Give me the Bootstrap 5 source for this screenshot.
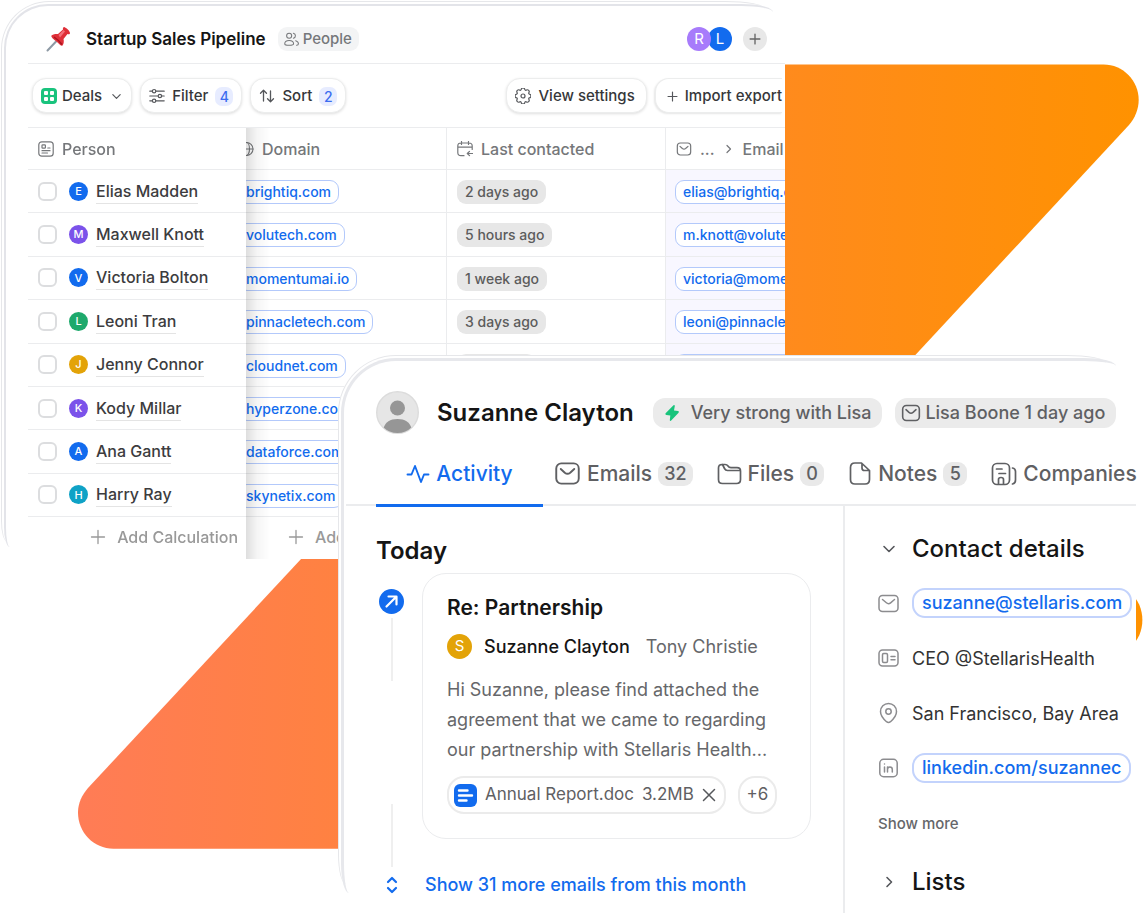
<!DOCTYPE html>
<html lang="en">
<head>
<meta charset="utf-8">
<meta name="viewport" content="width=device-width, initial-scale=1">
<title>Startup Sales Pipeline</title>
<link href="https://cdn.jsdelivr.net/npm/bootstrap@5.3.0/dist/css/bootstrap.min.css" rel="stylesheet">
<style>
  :root { --accent:#126bee; --line:#ebecee; --muted:#75777a; --pillline:#b3c9fb; }
  body { font-family: Inter, "Liberation Sans", sans-serif; font-size:16px; color:#151515; background:#fff; }
  svg { display:block; flex:none; }
  a { text-decoration:none; }
  .ico { fill:none; stroke:currentColor; stroke-linecap:round; stroke-linejoin:round; }
  .tone-dark { color:#55575b; }
  .tone-text { color:#66676a; }
  .tone-accent { color:var(--accent); }

  .stage { display:grid; position:relative; min-height:100vh; overflow:hidden;
    grid-template-columns: minmax(0,338fr) minmax(0,447fr) minmax(0,351fr) minmax(0,7fr);
    grid-template-rows: 355px 204px auto; }
  .backdrop { position:absolute; inset:0 auto auto 0; width:100%; height:auto; }
  .win { position:relative; background:#fff; }
  .win::before, .win::after { content:""; position:absolute; pointer-events:none; border:0 solid #e6e7ea; }
  .win-back { grid-area:1/1/3/3; overflow:hidden; border-top-left-radius:48px; }
  .win-back::before { inset:1px 20px 18px 1px; border-width:1px 0 0 1px; border-radius:48px 40px 0 6px / 48px 8px 0 20px; }
  .win-back::after { inset:4px 12px 12px 4px; border-width:2px 0 0 2px; border-color:#e3e4e9; border-radius:44px 32px 0 6px / 44px 8px 0 20px; }
  .win-front { grid-area:2/2/4/4; border-top-left-radius:58px; padding-left:8px; }
  .win-front::before { inset:0 30px 32px 0; border-width:1px 0 0 1px; border-radius:58px 40px 0 8px / 58px 8px 0 30px; }
  .win-front::after { inset:3px 20px 23px 3px; border-width:3px 0 0 3px; border-color:#e7e8ec; border-radius:55px 32px 0 8px / 55px 8px 0 30px; }

  /* pipeline window */
  .pipe-inner { padding-left:28px; }
  .pipe-head { height:64px; padding-bottom:1px; border-bottom:1px solid var(--line); }
  .pipe-bar { height:50px; margin-top:14px; }
  .pin { margin-left:18px; }
  .pipe-title { font-size:17px; font-weight:600; margin:0; }
  .chip-people { background:#f3f4f5; color:var(--muted); border-radius:9px; height:24px; padding:0 7px 0 6px; margin-left:12px; font-size:15px; font-weight:500; }
  .dot { border-radius:50%; color:#fff; display:inline-flex; align-items:center; justify-content:center; flex:none; }
  .dot-24 { width:24px; height:24px; font-size:15px; }
  .dot-19 { width:19px; height:19px; font-size:11px; font-weight:500; margin:0 8px 0 12px; }
  .dot-25 { width:25px; height:25px; font-size:15px; }
  .c-blue { background:#126bee; } .c-violet { background:#7b52ea; } .c-lilac { background:#a77bfb; }
  .c-green { background:#1ea96c; } .c-gold { background:#e3a308; } .c-teal { background:#0fa2c6; }
  .overlapped { margin-left:-3px; }
  .add-dot { width:24px; height:24px; border:0; border-radius:50%; background:#e8e8e8; color:#666; padding:0; margin:0 2px 0 11px; }
  .pipe-tools { height:63px; padding:0 3px 0 4px; }
  .tool { height:35px; border:1px solid #eceded; border-radius:14px; background:#fff; box-shadow:0 1px 3px rgba(0,0,0,.13);
    font-size:15px; font-weight:500; color:#36373a; padding:1px 8px 0; display:inline-flex; align-items:center; gap:7px; white-space:nowrap; flex:none; }
  .tool-tight { gap:5px; padding-right:9px; }
  .tool-wide { padding-right:11px; }
  .tool-cut { padding:1px 0 0 11px; border-right:0; border-radius:14px 0 0 14px; box-shadow:-1px 1px 2px rgba(0,0,0,.1); }
  .tool svg { color:#55575b; }
  .count { background:#e7ecff; color:#3b6cf0; border-radius:7px; font-size:14px; height:19px; min-width:18px; display:inline-flex; align-items:center; justify-content:center; }

  .deals { width:100%; height:432px; table-layout:fixed; border-collapse:separate; border-spacing:0; }
  .deals th, .deals td { border-top:1px solid var(--line); padding:0; vertical-align:middle; white-space:nowrap; font-weight:400; text-align:left; }
  .deals thead th { height:42px; color:var(--muted); font-weight:500; }
  .deals tbody tr, .deals tfoot tr { height:43px; }
  .col-person { width:218px; } .col-domain { width:200px; } .col-last { width:219px; }
  .deals th:first-child, .deals td:first-child { position:sticky; left:0; z-index:2; background:#fff; }
  .deals th:first-child, .deals tbody td:first-child { padding-left:10px; }
  .cell-shade { position:absolute; left:100%; top:0; bottom:-1px; width:24px; background:linear-gradient(90deg,rgba(0,0,0,.13),rgba(0,0,0,.04) 45%,transparent); }
  .behind { margin-left:-10px; }
  .linkpill.behind { margin-left:-8px; }
  .deals .edge { border-left:1px solid var(--line); padding-left:10px; overflow:hidden; }
  .deals tbody .mailcell { background:#f8f7ff; padding-left:9px; }
  .pick { appearance:none; width:19px; height:19px; border:2px solid #dcdddf; border-radius:6px; background:#fff; margin:0; flex:none; }
  .pick:checked { background:var(--accent); }
  .who { color:#3c3c3e; border-bottom:1px solid #e4e4e4; line-height:24px; font-weight:500; }
  .linkpill { display:inline-block; border:1px solid var(--pillline); border-radius:9px; background:#fff; color:var(--accent); font-size:14px; font-weight:500; line-height:22px; padding:0 7px; vertical-align:middle; }
  .agopill { display:inline-block; background:#e7e7e7; color:#5c5c5c; border-radius:9px; font-size:14px; font-weight:500; line-height:24px; padding:0 8px; vertical-align:middle; }
  .calc { color:#999; font-weight:500; background:none; border:0; padding:0; display:inline-flex; align-items:center; gap:11px; }
  .calc-cell { padding-left:42px !important; }

  /* record window */
  .rec-head { padding:36px 0 0 30px; height:79px; }
  .rec-name { font-size:24px; font-weight:600; margin:0 19px 0 18px; white-space:nowrap; line-height:30px; }
  .greychip { background:#ebebeb; color:#5f6063; border-radius:12px; height:30px; padding:0 11px 0 8px; font-size:18px; font-weight:500; display:inline-flex; align-items:center; white-space:nowrap; }
  .greychip + .greychip { margin-left:13px; padding-left:6px; }
  .rec-tabs { height:72px; padding-left:30px; border-bottom:2px solid var(--line); }
  .rec-tab { height:73px; margin-left:24px; font-size:21px; color:#5f6063; display:inline-flex; align-items:center; padding-top:9px; gap:6px; white-space:nowrap; flex:none; font-weight:500; border-bottom:3px solid transparent; }
  .rec-tab.active { color:var(--accent); border-bottom-color:var(--accent); width:167px; justify-content:center; margin:0 -13px 0 0; }
  .tabcount { background:#e9e9e9; border-radius:9px; height:24px; min-width:24px; padding:0 6px; font-size:18px; display:inline-flex; align-items:center; justify-content:center; }
  .rec-body { display:grid; grid-template-columns:minmax(0,1fr) 293px; }
  .feed { padding:29px 32px 0 30px; }
  .side { border-left:2px solid var(--line); padding:27px 0 0 33px; min-height:407px; }
  .feed h2, .side h2 { margin:0; line-height:32px; font-size:24px; font-weight:600; }
  .side h2 { font-weight:500; }
  .rail { width:31px; flex:none; }
  .rail-line { padding-top:18px; margin-bottom:-28px; }
  .rail i { width:2px; height:63px; background:#efefef; }
  .feed-main { margin-left:15px; }
  .mail { border:1px solid var(--line); border-radius:24px; padding:20px 24px 24px; margin-top:6px; }
  .mail h3 { font-size:21px; font-weight:600; line-height:28px; margin:0; }
  .people-row { font-size:18px; height:30px; margin-top:9px; white-space:nowrap; }
  .snippet { font-size:18px; line-height:30px; margin:14px 0 11px; white-space:nowrap; }
  .file { border:2px solid #ebebeb; border-radius:17px; height:38px; min-width:39px; background:#fff; color:#5f6063; font-size:17px; display:inline-flex; align-items:center; justify-content:center; white-space:nowrap; padding:0 0 0 5px; }
  .file-more { padding:0; margin-left:12px; }
  .more-row { margin-top:32px; }
  .more-link { color:var(--accent); font-size:18px; font-weight:500; line-height:28px; white-space:nowrap; margin-left:18px; }
  .facts { display:grid; gap:25px; margin:23px 0 29px; padding:0; list-style:none; }
  .facts li { display:flex; align-items:center; height:30px; gap:13px; font-size:18px; color:#333; white-space:nowrap; }
  .facts svg { color:#8c8c8f; }
  .facts a { border:2px solid #c3d3fc; border-radius:13px; color:var(--accent); font-weight:500; line-height:26px; padding:0 8px; }
  .plainbtn { border:0; background:none; padding:0; }
  .show-more { font-size:15px; font-weight:500; line-height:24px; margin-bottom:30px; }
</style>
</head>
<body>
<svg width="0" height="0" class="position-absolute" aria-hidden="true">
  <symbol id="i-mail" viewBox="0 0 24 24"><rect x="2" y="3" width="20" height="18" rx="4.500"/><path d="M6 8l3.600 3.300q2.400 2 4.800 0L18 8"/></symbol>
  <symbol id="i-plus" viewBox="0 0 16 16"><path d="M8 1.500v13M1.500 8h13"/></symbol>
</svg>
<main class="stage">
  <svg class="backdrop" viewBox="0 0 1143 916" aria-hidden="true">
    <defs><linearGradient id="sun" gradientUnits="userSpaceOnUse" x1="78" y1="0" x2="1143" y2="0"><stop stop-color="#ff7c56"/><stop offset="1" stop-color="#ff9200"/></linearGradient></defs>
    <g fill="url(#sun)">
      <path d="M700 64.500H1103.500C1123 64.500 1138.700 80.500 1138.700 100C1138.700 109 1135 118 1129 125L842 434H700Z"/>
      <path d="M356 500L88 788C82 795 78 803 78 812.500C78 832.500 93.500 848.700 113.500 848.700H400V500Z"/>
      <path d="M1130 593C1146.500 605 1146.500 635 1130 647Z"/>
    </g>
  </svg>

  <section class="win win-back" aria-label="Pipeline">
    <div class="pipe-inner">
      <header class="pipe-head d-flex">
        <div class="pipe-bar d-flex align-items-center w-100">
          <svg width="24" height="26" viewBox="0 0 24 26" class="pin me-3"><path d="M1.500 24.500L11 14.500" stroke="#8e9aa5" stroke-width="2" stroke-linecap="round"/><path d="M5.500 9.500C8 7.600 11 8 12 8L17 3.500C16.600 2 17.500.8 18.600 1.200C21 2 23.800 5 24 7C24 8 23 8.600 21.500 8L17.500 13C18 15 18 17.500 16.500 19.500C15.500 20.500 14 19 11 16C8 13.500 4.500 11 5.500 9.500Z" fill="#df2f38"/><path d="M12.500 9L17.500 4L19 5.500L14 11.500Z" fill="#f4707a"/><path d="M8 11C11 13 14 15.500 16 18.500" stroke="#a9151f" stroke-width="1.500" fill="none"/></svg>
          <h1 class="pipe-title text-nowrap">Startup Sales Pipeline</h1>
          <span class="chip-people d-inline-flex align-items-center gap-1"><svg class="ico" width="15" height="15" viewBox="0 0 16 16" stroke-width="1.100"><circle cx="5.500" cy="4" r="2.700"/><path d="M.8 12.500C.8 10 3 9 5.500 9S10.200 10 10.200 12.500C10.200 14 9 14.200 5.500 14.200S.8 14 .8 12.500ZM10 1.300a2.700 2.700 0 0 1 0 5.300M12.500 9.300c2 .7 2.900 1.700 2.900 3.300 0 1-.7 1.600-2 1.600"/></svg>People</span>
          <div class="d-flex align-items-center ms-auto pe-3">
            <span class="dot dot-24 c-lilac position-relative z-1">R</span><span class="dot dot-24 c-blue overlapped">L</span>
            <button class="add-dot d-flex align-items-center justify-content-center" aria-label="Add member"><svg class="ico" width="12" height="12" stroke-width="1.800"><use href="#i-plus"/></svg></button>
          </div>
        </div>
      </header>

      <div class="pipe-tools d-flex align-items-center gap-2">
        <button class="tool tool-tight"><svg width="16" height="16" viewBox="0 0 16 16"><rect width="16" height="16" rx="4" fill="#19c37d"/><g fill="#fff"><rect x="3" y="3" width="4" height="4" rx="1"/><rect x="9" y="3" width="4" height="4" rx="1"/><rect x="3" y="9" width="4" height="4" rx="1"/><rect x="9" y="9" width="4" height="4" rx="1"/></g></svg>Deals<svg class="ico ms-1" width="11" height="11" viewBox="0 0 12 12" stroke-width="1.300"><path d="M2 4l4 4 4-4"/></svg></button>
        <button class="tool"><svg class="ico" width="16" height="16" viewBox="0 0 16 16" stroke-width="1.200"><path d="M.8 3.200h2.400M7 3.200h8.200M.8 8h8.200M12.800 8h2.400M.8 12.800h2.400M7 12.800h8.200"/><circle cx="5.100" cy="3.200" r="1.700"/><circle cx="10.900" cy="8" r="1.700"/><circle cx="5.100" cy="12.800" r="1.700"/></svg>Filter<span class="count">4</span></button>
        <button class="tool"><svg class="ico" width="16" height="16" viewBox="0 0 16 16" stroke-width="1.300"><path d="M4.500 13V2.500M1.500 5.200l3-3 3 3M11.500 3v10.500M8.500 10.800l3 3 3-3"/></svg>Sort<span class="count">2</span></button>
        <button class="tool tool-wide ms-auto"><svg class="ico" width="16" height="16" viewBox="0 0 16 16" stroke-width="1.200"><path d="M9.796 1.343c-.527-1.790-3.065-1.790-3.592 0l-.094.319a.873.873 0 0 1-1.255.520l-.292-.160c-1.640-.892-3.433.902-2.540 2.541l.159.292a.873.873 0 0 1-.520 1.255l-.319.094c-1.790.527-1.790 3.065 0 3.592l.319.094a.873.873 0 0 1 .520 1.255l-.160.292c-.892 1.640.901 3.434 2.541 2.540l.292-.159a.873.873 0 0 1 1.255.520l.094.319c.527 1.790 3.065 1.790 3.592 0l.094-.319a.873.873 0 0 1 1.255-.520l.292.160c1.640.893 3.434-.902 2.540-2.541l-.159-.292a.873.873 0 0 1 .520-1.255l.319-.094c1.790-.527 1.790-3.065 0-3.592l-.319-.094a.873.873 0 0 1-.520-1.255l.160-.292c.893-1.640-.902-3.433-2.541-2.540l-.292.159a.873.873 0 0 1-1.255-.520z"/><circle cx="8" cy="8" r="2"/></svg>View settings</button>
        <button class="tool tool-cut"><svg class="ico" width="11" height="11" stroke-width="1.700"><use href="#i-plus"/></svg>Import export</button>
      </div>

      <table class="deals">
        <colgroup><col class="col-person"><col class="col-domain"><col class="col-last"><col></colgroup>
        <thead><tr>
          <th scope="col"><span class="d-flex align-items-center gap-2"><svg class="ico" width="16" height="16" viewBox="0 0 16 16" stroke-width="1.200"><rect x=".8" y=".8" width="14.400" height="14.400" rx="3"/><rect x="4" y="3.800" width="3.400" height="3.400" rx=".8"/><path d="M9.800 7H12M4 9.700h8M4 12h5.500"/></svg>Person</span><span class="cell-shade"></span></th>
          <th scope="col"><span class="d-flex align-items-center gap-2 behind"><svg class="ico ms-1" width="14" height="16" viewBox="0 0 14 16" stroke-width="1.100"><circle cx="6.500" cy="8" r="6.500"/><ellipse cx="6.500" cy="8" rx="3" ry="6.500"/><path d="M0 8h13"/></svg>Domain</span></th>
          <th scope="col" class="edge"><span class="d-flex align-items-center gap-2"><svg class="ico" width="16" height="16" viewBox="0 0 16 16" stroke-width="1.200"><path d="M7 14.700H4Q.8 14.700.8 11.500V5Q.8 2 4 2h8q3.200 0 3.200 3v3.500M.8 6.200h14.400M4.500.5v3M11.500.5v3M15.500 12.500h-5M12.500 10.300l-2.200 2.200 2.200 2.200"/></svg>Last contacted</span></th>
          <th scope="col" class="edge"><span class="d-flex align-items-center gap-2"><svg class="ico" width="16" height="16" stroke-width="1.800"><use href="#i-mail"/></svg>...<svg class="ico" width="12" height="12" viewBox="0 0 12 12" stroke-width="1.200"><path d="M4 2.500L7.500 6 4 9.500"/></svg>Email</span></th>
        </tr></thead>
        <tbody>
          <tr><td><span class="d-flex align-items-center"><input type="checkbox" class="pick" aria-label="Select Elias Madden"><span class="dot dot-19 c-blue">E</span><span class="who">Elias Madden</span></span><span class="cell-shade"></span></td><td><a href="#" class="linkpill behind">brightiq.com</a></td><td class="edge"><span class="agopill">2 days ago</span></td><td class="edge mailcell"><a href="#" class="linkpill">elias@brightiq.com</a></td></tr>
          <tr><td><span class="d-flex align-items-center"><input type="checkbox" class="pick" aria-label="Select Maxwell Knott"><span class="dot dot-19 c-violet">M</span><span class="who">Maxwell Knott</span></span><span class="cell-shade"></span></td><td><a href="#" class="linkpill behind">volutech.com</a></td><td class="edge"><span class="agopill">5 hours ago</span></td><td class="edge mailcell"><a href="#" class="linkpill">m.knott@volutech.com</a></td></tr>
          <tr><td><span class="d-flex align-items-center"><input type="checkbox" class="pick" aria-label="Select Victoria Bolton"><span class="dot dot-19 c-blue">V</span><span class="who">Victoria Bolton</span></span><span class="cell-shade"></span></td><td><a href="#" class="linkpill behind">momentumai.io</a></td><td class="edge"><span class="agopill">1 week ago</span></td><td class="edge mailcell"><a href="#" class="linkpill">victoria@momentumai.io</a></td></tr>
          <tr><td><span class="d-flex align-items-center"><input type="checkbox" class="pick" aria-label="Select Leoni Tran"><span class="dot dot-19 c-green">L</span><span class="who">Leoni Tran</span></span><span class="cell-shade"></span></td><td><a href="#" class="linkpill behind">pinnacletech.com</a></td><td class="edge"><span class="agopill">3 days ago</span></td><td class="edge mailcell"><a href="#" class="linkpill">leoni@pinnacletech.com</a></td></tr>
          <tr><td><span class="d-flex align-items-center"><input type="checkbox" class="pick" aria-label="Select Jenny Connor"><span class="dot dot-19 c-gold">J</span><span class="who">Jenny Connor</span></span><span class="cell-shade"></span></td><td><a href="#" class="linkpill behind">cloudnet.com</a></td><td class="edge"><span class="agopill">1 day ago</span></td><td class="edge mailcell"><a href="#" class="linkpill">jenny@cloudnet.com</a></td></tr>
          <tr><td><span class="d-flex align-items-center"><input type="checkbox" class="pick" aria-label="Select Kody Millar"><span class="dot dot-19 c-violet">K</span><span class="who">Kody Millar</span></span><span class="cell-shade"></span></td><td><a href="#" class="linkpill behind">hyperzone.com</a></td><td class="edge"></td><td class="edge mailcell"></td></tr>
          <tr><td><span class="d-flex align-items-center"><input type="checkbox" class="pick" aria-label="Select Ana Gantt"><span class="dot dot-19 c-blue">A</span><span class="who">Ana Gantt</span></span><span class="cell-shade"></span></td><td><a href="#" class="linkpill behind">dataforce.com</a></td><td class="edge"></td><td class="edge mailcell"></td></tr>
          <tr><td><span class="d-flex align-items-center"><input type="checkbox" class="pick" aria-label="Select Harry Ray"><span class="dot dot-19 c-teal">H</span><span class="who">Harry Ray</span></span><span class="cell-shade"></span></td><td><a href="#" class="linkpill behind">skynetix.com</a></td><td class="edge"></td><td class="edge mailcell"></td></tr>
        </tbody>
        <tfoot><tr>
          <td class="text-end pe-2"><button class="calc"><svg class="ico" width="16" height="16" stroke-width="1.300"><use href="#i-plus"/></svg>Add Calculation</button><span class="cell-shade"></span></td>
          <td class="calc-cell"><button class="calc" aria-label="Add domain calculation"><svg class="ico" width="16" height="16" stroke-width="1.300"><use href="#i-plus"/></svg>Add</button></td>
          <td></td><td></td>
        </tr></tfoot>
      </table>
    </div>
  </section>

  <section class="win win-front" aria-label="Suzanne Clayton">
    <header class="rec-head d-flex align-items-center">
      <svg width="43" height="43" viewBox="0 0 43 43"><defs><clipPath id="face"><circle cx="21.500" cy="21.500" r="20.500"/></clipPath></defs><circle cx="21.500" cy="21.500" r="20.800" fill="#e6e6e6" stroke="#dcdcdc" stroke-width="1.400"/><circle cx="21.500" cy="17" r="7.500" fill="#969696"/><path clip-path="url(#face)" d="M7.500 37C9.500 31 14 28 21.500 28S33.500 31 35.500 37V43H7.500Z" fill="#969696"/></svg>
      <h2 class="rec-name">Suzanne Clayton</h2>
      <span class="greychip"><svg class="me-2" width="22" height="20" viewBox="0 0 22 20"><path d="M12.500 2.200L4.600 10.300Q3.700 11.600 5.300 11.900L9.300 12.600 8.800 17.200Q9 18.600 10.200 17.600L17.600 9.700Q18.500 8.400 17 8.100L13 7.500 13.800 3Q13.700 1.400 12.500 2.200Z" fill="#18c47c"/></svg>Very strong with Lisa</span>
      <span class="greychip"><svg class="ico" width="20" height="20" stroke-width="1.900"><use href="#i-mail"/></svg><span class="ms-1">Lisa Boone 1 day ago</span></span>
    </header>
    <nav class="rec-tabs d-flex" aria-label="Record sections">
      <a href="#" class="rec-tab active"><svg class="ico" width="24" height="22" viewBox="0 0 24 22" stroke-width="1.900"><path d="M1.500 11.500H5.500L9 3L15 19L18 11.500H22.500"/></svg>Activity</a>
      <a href="#" class="rec-tab"><svg class="ico" width="27" height="27" stroke-width="1.700"><use href="#i-mail"/></svg>Emails<span class="tabcount">32</span></a>
      <a href="#" class="rec-tab"><svg class="ico" width="25" height="24" viewBox="0 0 25 24" stroke-width="1.700"><path d="M1.500 6Q1.500 2.500 5 2.500H8Q10 2.500 11 4T14 5.700H20Q23.500 5.700 23.500 9V17.500Q23.500 21.500 19.500 21.500H5.500Q1.500 21.500 1.500 17.500ZM5.500 2.500L7.500 6.500Q8.500 8.500 10.500 8.500H23"/></svg>Files<span class="tabcount">0</span></a>
      <a href="#" class="rec-tab"><svg class="ico" width="24" height="25" viewBox="-1 0 24 24" stroke-width="1.700"><path d="M6 1.500H12.500L20.500 9V18Q20.500 22.500 16 22.500H6Q1.500 22.500 1.500 18V6Q1.500 1.500 6 1.500ZM13 2V6.500Q13 9 15.500 9H20"/></svg>Notes<span class="tabcount">5</span></a>
      <a href="#" class="rec-tab"><svg class="ico" width="26" height="24" viewBox="0 0 26 24" stroke-width="1.700"><rect x="1.500" y="1.500" width="17" height="21" rx="4.500"/><path d="M5.500 7H11M8 11.500H14.500M7.500 22V17.500Q7.500 15.500 10 15.500T12.500 17.500V22M21.500 6Q24.500 6.500 24.500 9.500V18Q24.500 21.500 21.500 22"/></svg>Companies</a>
    </nav>
    <div class="rec-body">
      <div class="feed">
        <h2>Today</h2>
        <div class="d-flex">
          <div class="rail rail-line d-flex flex-column align-items-center">
            <span class="dot dot-25 c-blue mt-1"><svg class="ico" width="15" height="15" viewBox="0 0 15 15" stroke-width="2.200"><path d="M2.500 12.500L12 3M4.500 2.500h8v8"/></svg></span>
            <i class="mt-1"></i><i class="mt-auto"></i>
          </div>
          <div class="feed-main flex-grow-1">
            <article class="mail">
              <h3>Re: Partnership</h3>
              <div class="people-row d-flex align-items-center"><span class="dot dot-25 c-gold me-2">S</span><span class="fw-medium ms-1">Suzanne Clayton</span><span class="ms-3 tone-text">Tony Christie</span></div>
              <p class="snippet tone-text">Hi Suzanne, please find attached the<br>agreement that we came to regarding<br>our partnership with Stellaris Health...</p>
              <div class="d-flex">
                <span class="file"><svg class="me-2" width="23" height="23" viewBox="0 0 23 23"><rect width="23" height="23" rx="6" fill="#126bee"/><path d="M5 6.500h8.500M5 11.500h13M5 16.500h7.500" stroke="#fff" stroke-width="2.400" stroke-linecap="round"/></svg>Annual Report.doc<span class="ms-2">3.2MB</span><button class="plainbtn mx-2 tone-dark" aria-label="Remove file"><svg class="ico" width="14" height="14" viewBox="0 0 14 14" stroke-width="1.500"><path d="M1.500 1.500l11 11M12.500 1.500l-11 11"/></svg></button></span>
                <button class="file file-more">+6</button>
              </div>
            </article>
          </div>
        </div>
        <div class="more-row d-flex align-items-center">
          <div class="rail d-flex justify-content-center tone-accent"><svg class="ico" width="12" height="18" viewBox="0 0 12 18" stroke-width="2.200"><path d="M2 6l4-4 4 4M2 12l4 4 4-4"/></svg></div>
          <a href="#" class="more-link">Show 31 more emails from this month</a>
        </div>
      </div>
      <aside class="side">
        <div class="d-flex align-items-center gap-2"><svg class="ico me-1 tone-dark" width="22" height="16" viewBox="0 0 21 16" stroke-width="1.600"><path d="M5.500 5.500l5 5 5-5"/></svg><h2>Contact details</h2></div>
        <ul class="facts">
          <li><svg class="ico" width="21" height="21" viewBox="0 0 21 21" stroke-width="1.500"><rect x="1" y="2.500" width="19" height="16" rx="3.500"/><path d="M4.500 6.500l3.900 3.300q2.100 1.700 4.200 0l3.900-3.300"/></svg><a href="#">suzanne@stellaris.com</a></li>
          <li><svg class="ico" width="21" height="20" viewBox="0 0 21 20" stroke-width="1.500"><rect x="1" y="2" width="19" height="16" rx="3.500"/><rect x="4.500" y="5.500" width="5" height="9" rx="1.200"/><path d="M13 8.500h4M13 11.700h4"/></svg>CEO @StellarisHealth</li>
          <li><svg class="ico" width="21" height="22" viewBox="0 0 21 22" stroke-width="1.500"><path d="M10.500 1.500C15 1.500 18.500 5 18.500 9.500C18.500 14 15 17.500 12.500 19.700Q10.500 21.300 8.500 19.700C6 17.500 2.500 14 2.500 9.500C2.500 5 6 1.500 10.500 1.500Z"/><circle cx="10.500" cy="9.500" r="2.700"/></svg>San Francisco, Bay Area</li>
          <li><svg class="ico" width="21" height="20" viewBox="0 0 21 20" stroke-width="1.500"><rect x="1.800" y="1.300" width="17.400" height="17.400" rx="3.800"/><path d="M6.500 9v5M6.500 6v.1M9.500 14V9M9.500 11.500C9.500 8.300 14.300 8.300 14.300 11.500V14"/></svg><a href="#">linkedin.com/suzannec</a></li>
        </ul>
        <button class="plainbtn show-more tone-text d-block">Show more</button>
        <div class="d-flex align-items-center gap-2"><svg class="ico me-1 tone-dark" width="22" height="16" viewBox="0 0 21 16" stroke-width="1.600"><path d="M8.500 3.500L13 8l-4.500 4.500"/></svg><h2>Lists</h2></div>
      </aside>
    </div>
  </section>
</main>
<script src="https://cdn.jsdelivr.net/npm/bootstrap@5.3.0/dist/js/bootstrap.bundle.min.js"></script>
</body>
</html>
